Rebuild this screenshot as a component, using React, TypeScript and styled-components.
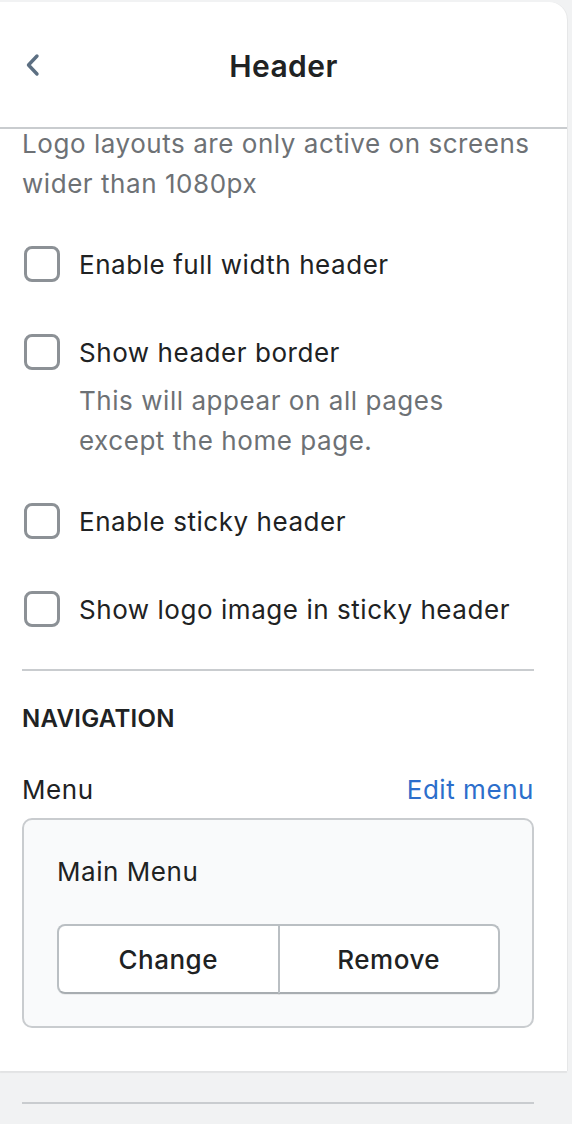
import React, { FC } from 'react';
import styled, { createGlobalStyle } from 'styled-components';

const GlobalStyle = createGlobalStyle`
  html, body {
    margin: 0;
    padding: 0;
    background: #f1f2f3;
  }
  body {
    font-family: Inter, "Noto Sans", "Liberation Sans", sans-serif;
    color: #202223;
    -webkit-font-smoothing: antialiased;
  }
`;

const Page = styled.div`
  width: 572px;
  height: 1124px;
  padding-top: 2px;
  box-sizing: border-box;
  background: #f1f2f3;
  overflow: hidden;
`;

const Panel = styled.div`
  width: 567px;
  background: #ffffff;
  border-top-right-radius: 18px;
  box-shadow: 0 2px 1px rgba(0, 0, 0, 0.06), 1px 0 0 rgba(0, 0, 0, 0.04);
  padding-bottom: 43px;
`;

const TopBar = styled.div`
  position: relative;
  height: 125px;
  display: flex;
  align-items: center;
  justify-content: center;
  border-bottom: 2px solid #c9cccf;
`;

const BackButton = styled.button`
  position: absolute;
  left: 18px;
  top: 50%;
  transform: translateY(-50%);
  width: 30px;
  height: 36px;
  padding: 0;
  border: none;
  background: none;
  display: flex;
  align-items: center;
  justify-content: center;
  color: #5c6f82;
`;

const Title = styled.h1`
  margin: 2px 0 0;
  font-size: 30px;
  font-weight: 600;
  color: #202223;
  letter-spacing: 0.4px;
`;

const Body = styled.div`
  padding: 0 33px 0 22px;
  letter-spacing: 0.55px;
`;

const Note = styled.p`
  margin: -5px 0 36px;
  font-size: 26px;
  line-height: 40px;
  color: #6d7175;
`;

const OptionList = styled.div`
  display: flex;
  flex-direction: column;
  gap: 40px;
`;

const Option = styled.div`
  display: flex;
  flex-direction: column;
`;

const OptionRow = styled.label`
  display: flex;
  align-items: center;
  gap: 19px;
  height: 48px;
  padding-left: 2px;
  font-size: 26px;
  color: #202223;
`;

const Box = styled.span`
  width: 36px;
  height: 36px;
  box-sizing: border-box;
  border: 3px solid #8c9196;
  border-radius: 8px;
  background: #ffffff;
  flex-shrink: 0;
`;

const Hint = styled.div`
  margin: 5px 0 -4px 57px;
  font-size: 26px;
  line-height: 40px;
  color: #6d7175;
`;

const Divider = styled.hr`
  margin: 36px 0 0;
  border: none;
  border-top: 2px solid #c9cccf;
`;

const SectionHeading = styled.h2`
  margin: 32px 0 34px;
  font-size: 24px;
  line-height: 32px;
  font-weight: 600;
  letter-spacing: 0.3px;
  text-transform: uppercase;
  color: #202223;
`;

const FieldRow = styled.div`
  display: flex;
  justify-content: space-between;
  align-items: center;
  height: 40px;
  margin-bottom: 9px;
  font-size: 26px;
`;

const LinkText = styled.a`
  color: #2c6ecb;
  text-decoration: none;
`;

const MenuCard = styled.div`
  border: 2px solid #c9cccf;
  border-radius: 10px;
  background: #f9fafb;
  padding: 32px 32px 32px 33px;
`;

const MenuName = styled.div`
  font-size: 26px;
  line-height: 40px;
  margin-bottom: 32px;
  color: #202223;
`;

const ButtonGroup = styled.div`
  display: flex;
`;

const SegmentButton = styled.button<{ $first?: boolean }>`
  flex: 1;
  height: 70px;
  background: #ffffff;
  border: 2px solid #babfc3;
  border-bottom-color: #a8adb1;
  border-radius: ${(p) => (p.$first ? '8px 0 0 8px' : '0 8px 8px 0')};
  margin-left: ${(p) => (p.$first ? '0' : '-2px')};
  box-shadow: 0 1px 0 rgba(0, 0, 0, 0.05);
  font-family: inherit;
  font-size: 26px;
  font-weight: 500;
  letter-spacing: 0.5px;
  color: #202223;
`;

const Footer = styled.div`
  padding: 31px 38px 0 22px;
`;

const FooterRule = styled.div`
  height: 2px;
  background: #c9cccf;
`;

const options = [
  { label: 'Enable full width header' },
  {
    label: 'Show header border',
    hint: ['This will appear on all pages', 'except the home page.'],
  },
  { label: 'Enable sticky header' },
  { label: 'Show logo image in sticky header' },
];

const App: FC = () => {
  return (
    <>
      <GlobalStyle />
      <Page>
        <Panel>
          <TopBar>
            <BackButton aria-label="Back">
              <svg width="18" height="24" viewBox="0 0 18 24" fill="none">
                <path
                  d="M13 3 L4.5 12 L13 21"
                  stroke="currentColor"
                  strokeWidth="3.4"
                  strokeLinecap="round"
                  strokeLinejoin="round"
                />
              </svg>
            </BackButton>
            <Title>Header</Title>
          </TopBar>
          <Body>
            <Note>
              Logo layouts are only active on screens
              <br />
              wider than 1080px
            </Note>
            <OptionList>
              {options.map((o) => (
                <Option key={o.label}>
                  <OptionRow>
                    <Box />
                    {o.label}
                  </OptionRow>
                  {o.hint && (
                    <Hint>
                      {o.hint[0]}
                      <br />
                      {o.hint[1]}
                    </Hint>
                  )}
                </Option>
              ))}
            </OptionList>
            <Divider />
            <SectionHeading>Navigation</SectionHeading>
            <FieldRow>
              <span>Menu</span>
              <LinkText href="#">Edit menu</LinkText>
            </FieldRow>
            <MenuCard>
              <MenuName>Main Menu</MenuName>
              <ButtonGroup>
                <SegmentButton $first>Change</SegmentButton>
                <SegmentButton>Remove</SegmentButton>
              </ButtonGroup>
            </MenuCard>
          </Body>
        </Panel>
        <Footer>
          <FooterRule />
        </Footer>
      </Page>
    </>
  );
};

export default App;
